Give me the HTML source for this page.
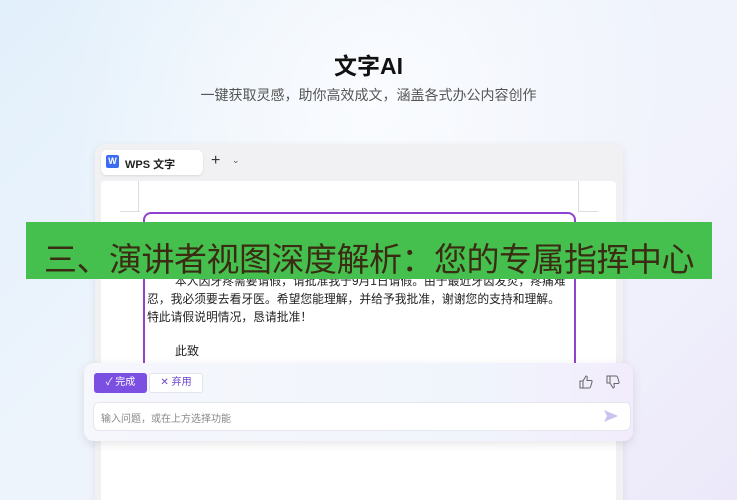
<!DOCTYPE html><html><head><meta charset="utf-8"><style>
*{margin:0;padding:0;box-sizing:border-box}
html,body{width:737px;height:500px;overflow:hidden}
body{position:relative;font-family:"Liberation Sans","Noto Sans CJK SC",sans-serif;background:linear-gradient(135deg,#e2f0fb 0%,#eef4fc 40%,#f1f2fc 70%,#ece8fa 100%)}
.a{position:absolute}
</style></head><body>
<div class="a" style="left:0;top:0;width:737px;height:500px;background:radial-gradient(ellipse at 50% 20%,rgba(255,255,255,.7),rgba(255,255,255,0) 60%)"></div>
<div class="a" style="left:0;width:737px;top:47px;text-align:center;font-size:23px;font-weight:bold;color:#111">文字AI</div>
<div class="a" style="left:0;width:737px;top:85px;text-align:center;font-size:14px;color:#555">一键获取灵感，助你高效成文，涵盖各式办公内容创作</div>
<div class="a" style="left:95px;top:144px;width:528px;height:370px;background:#f1f1f3;border-radius:10px;box-shadow:0 2px 8px rgba(0,0,0,.08)"></div>
<div class="a" style="left:101px;top:150px;width:102px;height:25px;background:#fff;border-radius:6px;box-shadow:0 1px 2px rgba(0,0,0,.1)"></div>
<div class="a" style="left:106px;top:155px;width:13px;height:13px;background:#3b6bf0;border-radius:2px;color:#fff;font-size:9px;font-weight:bold;text-align:center;line-height:13px">W</div>
<div class="a" style="left:125px;top:156px;font-size:11px;color:#222;font-weight:bold">WPS 文字</div>
<div class="a" style="left:211px;top:152px;font-size:16px;color:#333">+</div>
<div class="a" style="left:232px;top:155px;font-size:9px;color:#555">⌄</div>
<div class="a" style="left:101px;top:181px;width:515px;height:330px;background:#fff;border-radius:4px"></div>
<div class="a" style="left:138px;top:181px;width:1px;height:30px;background:#ddd"></div>
<div class="a" style="left:578px;top:181px;width:1px;height:30px;background:#ddd"></div>
<div class="a" style="left:120px;top:211px;width:20px;height:1px;background:#ddd"></div>
<div class="a" style="left:578px;top:211px;width:20px;height:1px;background:#ddd"></div>
<div class="a" style="left:143px;top:212px;width:433px;height:170px;border:2px solid #8f42d0;border-radius:8px"></div>
<div class="a" style="left:147px;top:272px;width:420px;font-size:11.8px;line-height:18px;color:#222">
<div style="padding-left:28px;white-space:nowrap">本人因牙疼需要请假，请批准我于9月1日请假。由于最近牙齿发炎，疼痛难</div>
<div style="white-space:nowrap">忍，我必须要去看牙医。希望您能理解，并给予我批准，谢谢您的支持和理解。</div>
<div style="white-space:nowrap">特此请假说明情况，恳请批准！</div></div>
<div class="a" style="left:175px;top:342px;font-size:12px;color:#222">此致</div>
<div class="a" style="left:26px;top:222px;width:686px;height:57px;background:#45c04f"></div>
<div class="a" style="left:26px;top:238px;width:686px;text-align:center;font-size:33px;line-height:44px;color:#3a2c12;white-space:nowrap;letter-spacing:-0.5px">三、演讲者视图深度解析：您的专属指挥中心</div>
<div class="a" style="left:84px;top:363px;width:549px;height:78px;border-radius:10px;background:linear-gradient(90deg,#f6f6fd,#f0f5fc 70%,#f2ecfc);box-shadow:0 3px 10px rgba(0,0,0,.1)"></div>
<div class="a" style="left:94px;top:373px;width:53px;height:20px;background:#7a4fe2;border-radius:3px;color:#fff;font-size:10px;line-height:20px;text-align:center">✓ 完成</div>
<div class="a" style="left:149px;top:373px;width:54px;height:20px;background:#fff;border:1px solid #e4e4ee;border-radius:3px;color:#6b45c9;font-size:10px;line-height:18px;text-align:center">✕ 弃用</div>
<svg class="a" style="left:579px;top:375px" width="14" height="14" viewBox="0 0 14 14" fill="none" stroke="#666" stroke-width="1"><path d="M1 6h3v7H1zM4 6l3-5c1 0 1.5 1 1.2 2L8 5.5h4c.8 0 1.3.7 1 1.5l-1.5 5c-.2.6-.7 1-1.3 1H4"/></svg>
<svg class="a" style="left:606px;top:375px" width="14" height="14" viewBox="0 0 14 14" fill="none" stroke="#666" stroke-width="1"><path d="M1 1h3v7H1zM4 8l3 5c1 0 1.5-1 1.2-2L8 8.5h4c.8 0 1.3-.7 1-1.5l-1.5-5c-.2-.6-.7-1-1.3-1H4"/></svg>
<div class="a" style="left:93px;top:402px;width:538px;height:29px;background:#fff;border:1px solid #e6e6ef;border-radius:6px"></div>
<div class="a" style="left:101px;top:410px;font-size:10px;color:#888">输入问题，或在上方选择功能</div>
<svg class="a" style="left:603px;top:409px" width="16" height="14" viewBox="0 0 16 14"><path d="M1 1L15 7L1 13L4 7Z" fill="#c7c4f0"/></svg>
</body></html>
